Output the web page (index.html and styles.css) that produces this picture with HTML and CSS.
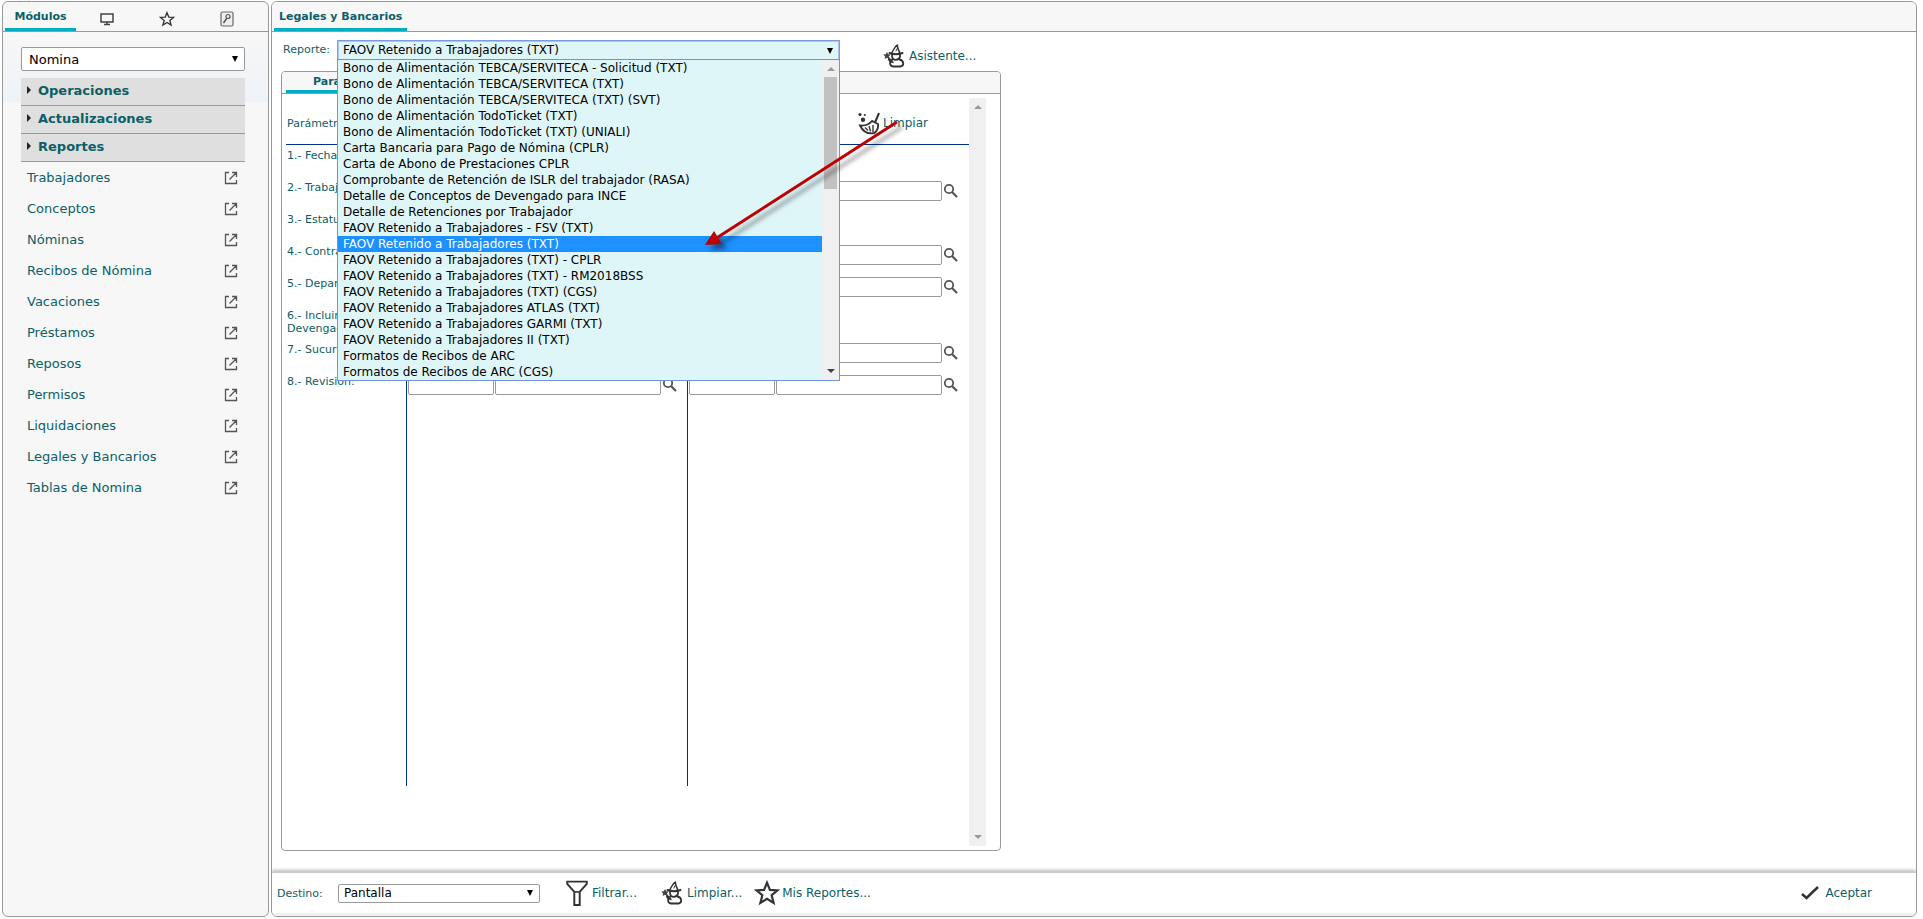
FILE: index.html
```html
<!DOCTYPE html>
<html lang="es">
<head>
<meta charset="utf-8">
<title>Legales y Bancarios</title>
<link rel="stylesheet" href="styles.css">
</head>
<body>
<svg class="defs" aria-hidden="true">
  <symbol id="i-open" viewBox="0 0 14 14"><path d="M5 1.500H1.500v11h11V9M8 1.500h4.500V6M12.200 1.800 5.500 8.500" fill="none" stroke="#555" stroke-width="1.300"/></symbol>
  <symbol id="i-search" viewBox="0 0 16 16"><circle cx="6" cy="6" r="4.200" fill="none" stroke="#555" stroke-width="1.800"/><path d="m9 9 5 5" stroke="#555" stroke-width="2.200"/></symbol>
  <symbol id="i-star" viewBox="0 0 24 24"><path d="m12 2.500 2.700 6.600 7.100.500-5.500 4.500 1.800 7.100-6.100-3.900-6.100 3.900 1.800-7.100-5.500-4.500 7.100-.500z" fill="none" stroke="#333" stroke-width="2"/></symbol>
  <symbol id="i-wizard" viewBox="0 0 24 24"><g fill="none" stroke="#333" stroke-width="1.500" stroke-linejoin="round" stroke-linecap="round"><path d="M9 8.500C10.500 6 11 3 14.500 1c-.500 3 1.500 5 2 7.500"/><path d="M6.500 9c4 1.500 9 1.500 13 0" stroke-width="2"/><path d="M9 10v2.500c.500 4.500 7 4.500 8 0V10" stroke-width="1.800"/><path d="M9.500 15.500c-3.500 2-3 6.500.500 7h7.500c4-.500 3.500-6-1-7" stroke-width="1.800"/><path d="m4 12 6 6.500M6 14c-1 2 1 4 3 4" /><path d="m13 7 1.500-3" stroke-width="1"/></g><path d="m4 8 1.200 2.300 2.500.3-1.800 1.800.4 2.500L4 13.700l-2.300 1.200.4-2.500L.3 10.600l2.500-.3z" fill="#444"/></symbol>
  <symbol id="i-broom" viewBox="0 0 24 24"><path d="m22 2-4 9.500" stroke="#333" stroke-width="2"/><path d="M3 14.500c5 .500 9-1 12-4.500l6 3c.500 4-1 7-3.500 9C11 23.500 6 20.500 3 14.500z" fill="none" stroke="#333" stroke-width="1.900"/><path d="m8 16.500 3 3m1-4.500 1.500 5.500M16 14v7" fill="none" stroke="#333" stroke-width="1.400"/><circle cx="3" cy="3.500" r="1.600" fill="#333"/><circle cx="7.800" cy="4" r="1.100" fill="#333"/><circle cx="6" cy="8.800" r="2.200" fill="#333"/></symbol>
  <symbol id="i-filter" viewBox="0 0 24 24"><path d="M3 1.500h18v2l-6.500 7.500v12h-5V11L3 3.500z" fill="none" stroke="#333" stroke-width="1.800"/><path d="M9.500 11h5" stroke="#333" stroke-width="1.500"/></symbol>
  <symbol id="i-check" viewBox="0 0 18 14"><path d="m1 8 4.500 4L17 1" fill="none" stroke="#333" stroke-width="2.500"/></symbol>
</svg>
<div class="app">
  <aside class="sidebar">
    <div class="side-tabs">
      <button class="side-tab active">Módulos</button>
      <button class="side-tab" aria-label="Escritorio"><svg width="14" height="14" viewBox="0 0 14 14"><path d="M1 2h12v8H1zM7 10v2M4 12.500h6" fill="none" stroke="#444" stroke-width="1.500"/></svg></button>
      <button class="side-tab" aria-label="Favoritos"><svg width="16" height="16"><use href="#i-star"/></svg></button>
      <button class="side-tab" aria-label="Clave"><svg width="14" height="16" viewBox="0 0 14 16"><rect x="1" y="1" width="12" height="14" rx="1.500" fill="#eee" stroke="#666" stroke-width="1.200"/><circle cx="8" cy="5.500" r="2" fill="none" stroke="#555" stroke-width="1.200"/><path d="m7 7-3.500 5" stroke="#555" stroke-width="1.500"/></svg></button>
    </div>
    <div class="side-body">
      <span class="picker"><select class="module-select" aria-label="Módulo"><option>Nomina</option></select></span>
      <div class="accordion">
        <button class="group">Operaciones</button>
        <button class="group">Actualizaciones</button>
        <button class="group">Reportes</button>
      </div>
      <nav class="links">
        <a href="#">Trabajadores<svg width="14" height="14"><use href="#i-open"/></svg></a>
        <a href="#">Conceptos<svg width="14" height="14"><use href="#i-open"/></svg></a>
        <a href="#">Nóminas<svg width="14" height="14"><use href="#i-open"/></svg></a>
        <a href="#">Recibos de Nómina<svg width="14" height="14"><use href="#i-open"/></svg></a>
        <a href="#">Vacaciones<svg width="14" height="14"><use href="#i-open"/></svg></a>
        <a href="#">Préstamos<svg width="14" height="14"><use href="#i-open"/></svg></a>
        <a href="#">Reposos<svg width="14" height="14"><use href="#i-open"/></svg></a>
        <a href="#">Permisos<svg width="14" height="14"><use href="#i-open"/></svg></a>
        <a href="#">Liquidaciones<svg width="14" height="14"><use href="#i-open"/></svg></a>
        <a href="#">Legales y Bancarios<svg width="14" height="14"><use href="#i-open"/></svg></a>
        <a href="#">Tablas de Nomina<svg width="14" height="14"><use href="#i-open"/></svg></a>
      </nav>
    </div>
  </aside>

  <main class="main">
    <div class="main-tabs"><button class="main-tab">Legales y Bancarios</button></div>
    <div class="content">
      <div class="report-row">
        <label class="report-label" for="reporte">Reporte:</label>
        <div class="combo">
          <span class="picker"><select id="reporte" class="report-select"><option>FAOV Retenido a Trabajadores (TXT)</option></select></span>
          <div class="dropdown">
            <ul class="options" role="listbox" aria-label="Reporte">
              <li role="option">Bono de Alimentación TEBCA/SERVITECA - Solicitud (TXT)</li>
              <li role="option">Bono de Alimentación TEBCA/SERVITECA (TXT)</li>
              <li role="option">Bono de Alimentación TEBCA/SERVITECA (TXT) (SVT)</li>
              <li role="option">Bono de Alimentación TodoTicket (TXT)</li>
              <li role="option">Bono de Alimentación TodoTicket (TXT) (UNIALI)</li>
              <li role="option">Carta Bancaria para Pago de Nómina (CPLR)</li>
              <li role="option">Carta de Abono de Prestaciones CPLR</li>
              <li role="option">Comprobante de Retención de ISLR del trabajador (RASA)</li>
              <li role="option">Detalle de Conceptos de Devengado para INCE</li>
              <li role="option">Detalle de Retenciones por Trabajador</li>
              <li role="option">FAOV Retenido a Trabajadores - FSV (TXT)</li>
              <li role="option" aria-selected="true" class="selected">FAOV Retenido a Trabajadores (TXT)</li>
              <li role="option">FAOV Retenido a Trabajadores (TXT) - CPLR</li>
              <li role="option">FAOV Retenido a Trabajadores (TXT) - RM2018BSS</li>
              <li role="option">FAOV Retenido a Trabajadores (TXT) (CGS)</li>
              <li role="option">FAOV Retenido a Trabajadores ATLAS (TXT)</li>
              <li role="option">FAOV Retenido a Trabajadores GARMI (TXT)</li>
              <li role="option">FAOV Retenido a Trabajadores II (TXT)</li>
              <li role="option">Formatos de Recibos de ARC</li>
              <li role="option">Formatos de Recibos de ARC (CGS)</li>
            </ul>
            <div class="scrollbar"><i class="up"></i><b class="thumb"></b><i class="down dark"></i></div>
          </div>
          <svg class="pointer" width="210" height="140" viewBox="0 0 210 140" aria-hidden="true"><path d="M199 9 17 126" stroke="#c00000" stroke-width="3"/><path d="m7 132 9-14 8 13z" fill="#c00000"/></svg>
        </div>
        <button class="tool assistant"><svg width="24" height="24"><use href="#i-wizard"/></svg>Asistente...</button>
      </div>

      <section class="panel">
        <div class="panel-tabs"><button class="panel-tab">Parámetros</button></div>
        <div class="panel-body">
          <div class="params">
            <div class="params-head"><span>Parámetros</span><button class="tool clear"><svg width="24" height="24"><use href="#i-broom"/></svg>Limpiar</button></div>
            <div class="row"><div class="cell">1.- Fecha:</div><div class="cell"></div><div class="cell"></div></div>
            <div class="row"><div class="cell">2.- Trabajador:</div>
              <div class="cell"><input class="code" aria-label="Trabajador desde"><input class="name" aria-label="Nombre desde"><button class="find" aria-label="Buscar"><svg width="16" height="16"><use href="#i-search"/></svg></button></div>
              <div class="cell"><input class="code" aria-label="Trabajador hasta"><input class="name" aria-label="Nombre hasta"><button class="find" aria-label="Buscar"><svg width="16" height="16"><use href="#i-search"/></svg></button></div></div>
            <div class="row"><div class="cell">3.- Estatus:</div><div class="cell"></div><div class="cell"></div></div>
            <div class="row"><div class="cell">4.- Contrato:</div>
              <div class="cell"><input class="code" aria-label="Contrato desde"><input class="name" aria-label="Nombre desde"><button class="find" aria-label="Buscar"><svg width="16" height="16"><use href="#i-search"/></svg></button></div>
              <div class="cell"><input class="code" aria-label="Contrato hasta"><input class="name" aria-label="Nombre hasta"><button class="find" aria-label="Buscar"><svg width="16" height="16"><use href="#i-search"/></svg></button></div></div>
            <div class="row"><div class="cell">5.- Departamento:</div>
              <div class="cell"><input class="code" aria-label="Departamento desde"><input class="name" aria-label="Nombre desde"><button class="find" aria-label="Buscar"><svg width="16" height="16"><use href="#i-search"/></svg></button></div>
              <div class="cell"><input class="code" aria-label="Departamento hasta"><input class="name" aria-label="Nombre hasta"><button class="find" aria-label="Buscar"><svg width="16" height="16"><use href="#i-search"/></svg></button></div></div>
            <div class="row"><div class="cell">6.- Incluir<br>Devengado:</div><div class="cell"></div><div class="cell"></div></div>
            <div class="row"><div class="cell">7.- Sucursal:</div>
              <div class="cell"><input class="code" aria-label="Sucursal desde"><input class="name" aria-label="Nombre desde"><button class="find" aria-label="Buscar"><svg width="16" height="16"><use href="#i-search"/></svg></button></div>
              <div class="cell"><input class="code" aria-label="Sucursal hasta"><input class="name" aria-label="Nombre hasta"><button class="find" aria-label="Buscar"><svg width="16" height="16"><use href="#i-search"/></svg></button></div></div>
            <div class="row"><div class="cell">8.- Revisión:</div>
              <div class="cell"><input class="code" aria-label="Revisión desde"><input class="name" aria-label="Nombre desde"><button class="find" aria-label="Buscar"><svg width="16" height="16"><use href="#i-search"/></svg></button></div>
              <div class="cell"><input class="code" aria-label="Revisión hasta"><input class="name" aria-label="Nombre hasta"><button class="find" aria-label="Buscar"><svg width="16" height="16"><use href="#i-search"/></svg></button></div></div>
            <div class="row rest"><div class="cell"></div><div class="cell"></div><div class="cell"></div></div>
          </div>
          <div class="scrollbar"><i class="up"></i><i class="down"></i></div>
        </div>
      </section>
    </div>

    <footer class="footer">
      <label class="dest-label" for="destino">Destino:</label>
      <span class="picker"><select id="destino" class="dest-select"><option>Pantalla</option></select></span>
      <div class="tools">
        <button class="tool filter"><svg width="26" height="26"><use href="#i-filter"/></svg>Filtrar...</button>
        <button class="tool wipe"><svg width="24" height="24"><use href="#i-wizard"/></svg>Limpiar...</button>
        <button class="tool mine"><svg width="26" height="26"><use href="#i-star"/></svg>Mis Reportes...</button>
      </div>
      <button class="tool accept"><svg width="18" height="14"><use href="#i-check"/></svg>Aceptar</button>
    </footer>
  </main>
</div>
</body>
</html>
```
FILE: styles.css
```css
* { box-sizing: border-box; }
body {
  margin: 0;
  background: #fff;
  color: #0b6067;
  font: 11px/13px Verdana, "DejaVu Sans", sans-serif;
}
button, select, input { font: inherit; color: inherit; }
button { border: 0; padding: 0; background: none; }
.defs { display: none; }
.app {
  display: flex;
  gap: 2px;
  height: 100vh;
  padding: 1px 6px 2px 2px;
}

/* Sidebar */
.sidebar {
  width: 267px;
  flex: none;
  border: 1px solid #999;
  border-radius: 6px;
  background: #f7f7f7;
  overflow: hidden;
}
.side-tabs {
  display: flex;
  height: 30px;
  padding-left: 2px;
  border-bottom: 1px solid #999;
}
.side-tab {
  width: 60px;
  display: flex;
  align-items: center;
  justify-content: center;
  padding: 5px 0 0 1px;
}
.side-tab.active {
  width: 71px;
  padding: 2px 0 0;
  border-bottom: 3px solid #00acc1;
  font-weight: bold;
}
.side-body {
  padding: 15px 23px 0 18px;
  background: linear-gradient(#f7f7f7, #eef2f7) no-repeat 0 0 / 100% 70px;
}
.picker { position: relative; display: block; }
.picker::after {
  content: "";
  position: absolute;
  right: 7px;
  top: 50%;
  margin-top: -3px;
  border: 3px solid transparent;
  border-top: 6px solid #000;
  border-bottom: 0;
}
select {
  display: block;
  appearance: none;
  width: 100%;
  border: 1px solid #999;
  border-radius: 2px;
  background: #fff;
  color: #000;
  font-size: 12px;
  padding: 0 5px;
}
.module-select { height: 24px; font-size: 13px; padding: 0 7px; }
.accordion { margin-top: 7px; }
.group {
  display: flex;
  align-items: center;
  width: 100%;
  height: 28px;
  padding: 0 0 3px 6px;
  border-bottom: 1px solid #999;
  background: #dfdfdf;
  font-size: 13px;
  font-weight: bold;
}
.group::before {
  content: "";
  border: 4px solid transparent;
  border-left-color: #222;
  border-right: 0;
  margin-right: 7px;
}
.links a {
  display: flex;
  align-items: center;
  justify-content: space-between;
  height: 31px;
  padding: 0 7px 0 6px;
  color: inherit;
  text-decoration: none;
  font-size: 13px;
}

/* Main window */
.main {
  flex: 1;
  min-width: 0;
  display: flex;
  flex-direction: column;
  border: 1px solid #999;
  border-radius: 6px;
  overflow: hidden;
}
.main-tabs {
  height: 30px;
  flex: none;
  padding-left: 2px;
  border-bottom: 1px solid #999;
  background: #f7f7f7;
}
.main-tab {
  height: 29px;
  padding: 2px 5px 0;
  border-bottom: 3px solid #00acc1;
  font-weight: bold;
}
.content {
  flex: 1;
  min-height: 0;
  display: flex;
  flex-direction: column;
  padding: 8px 9px 21px;
}
.report-row { display: flex; height: 31px; flex: none; }
.report-label { width: 56px; padding: 3px 0 0 2px; }
.combo { position: relative; width: 503px; }
.report-select {
  height: 21px;
  border: 1px solid #7a9be0;
  border-radius: 0;
  background: #dff6f8;
  outline: 1px solid #a9c4f5;
  outline-offset: -2px;
}
.dropdown {
  position: absolute;
  z-index: 2;
  top: 19px;
  left: 0;
  right: 0;
  display: flex;
  border: 1px solid #6f93d4;
  background: #dff6f8;
}
.options {
  flex: 1;
  margin: 0;
  padding: 0;
  list-style: none;
  color: #000;
  font-size: 12px;
  line-height: 16px;
}
.options li { padding-left: 5px; white-space: nowrap; }
.options .selected { background: #1e90ff; color: #fff; }
.scrollbar {
  width: 17px;
  flex: none;
  display: flex;
  flex-direction: column;
  justify-content: space-between;
  align-items: center;
  padding: 7px 0;
  background: #f0f0f0;
}
.up, .down { border: 4px solid transparent; }
.up { border-top: 0; border-bottom-color: #999; }
.down { border-bottom: 0; border-top-color: #999; }
.dark { border-top-color: #444; }
.thumb { width: 13px; height: 112px; margin: 6px 0 auto; background: #c1c1c1; }
.pointer {
  position: absolute;
  z-index: 3;
  left: 361px;
  top: 73px;
  filter: drop-shadow(5px 5px 2px rgba(0, 0, 0, .4));
  overflow: visible;
}
.tool {
  display: flex;
  align-items: center;
  gap: 2px;
  font-size: 12px;
  white-space: nowrap;
}
.assistant { height: 32px; margin-left: 43px; }

/* Parameters */
.panel {
  flex: 1;
  min-height: 0;
  width: 720px;
  display: flex;
  flex-direction: column;
  border: 1px solid #999;
  border-radius: 4px;
  overflow: hidden;
}
.panel-tabs {
  height: 22px;
  flex: none;
  padding-left: 4px;
  border-bottom: 1px solid #999;
  background: #f7f7f7;
}
.panel-tab {
  height: 21px;
  padding: 1px 27px 0;
  border-bottom: 3px solid #00acc1;
  font-weight: bold;
}
.panel-body { flex: 1; display: flex; padding: 4px 14px 4px 4px; }
.params {
  flex: 1;
  display: flex;
  flex-direction: column;
  padding-bottom: 60px;
}
.params-head {
  display: flex;
  align-items: center;
  justify-content: space-between;
  height: 47px;
  padding: 4px 41px 0 1px;
  border-bottom: 1px solid #003087;
}
.row { display: grid; grid-template-columns: 120px 281px 1fr; min-height: 32px; }
.rest { flex: 1; }
.cell { display: flex; align-items: flex-start; padding: 4px 0; }
.cell:first-child { padding-left: 1px; }
.cell + .cell { padding-left: 1px; border-left: 1px solid #003087; }
.cell input {
  height: 20px;
  margin-right: 1px;
  border: 1px solid #999;
  border-radius: 2px;
  background: #fff;
}
.code { width: 86px; }
.name { width: 166px; }
.find { height: 20px; }
.find svg { display: block; }

/* Footer */
.footer {
  flex: none;
  display: flex;
  align-items: center;
  height: 44px;
  padding: 0 44px 0 5px;
  border-top: 1px solid #ccc;
  border-bottom: 3px solid #eef2f7;
  box-shadow: 0 -2px 3px rgba(0, 0, 0, .25);
}
.dest-label { width: 61px; }
.dest-select { width: 202px; height: 19px; }
.tools { display: flex; align-items: center; gap: 24px; margin-left: 24px; }
.mine { margin-left: -12px; }
.accept { margin-left: auto; gap: 6px; }
```
